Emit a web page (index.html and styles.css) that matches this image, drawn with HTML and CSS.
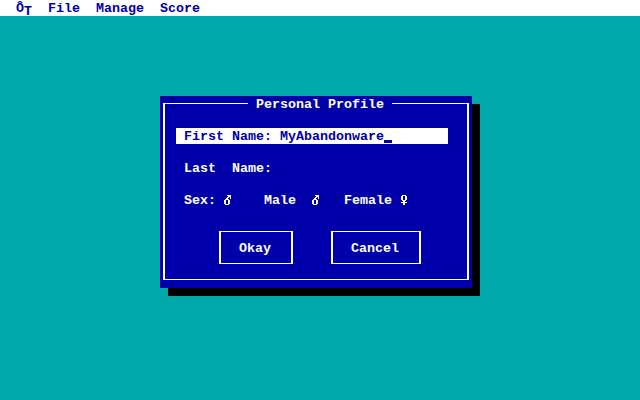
FILE: index.html
```html
<!DOCTYPE html>
<html lang="en">
    <head>
        <meta charset="UTF-8">
        <title>Personal Profile</title>
        <link rel="stylesheet" href="styles.css">
    </head>

    <body class="screen">
        <nav class="menu">
            <span class="menu__logo">Ô<span class="menu__logo__sub">T</span></span>
            <span class="menu__entry">File</span>
            <span class="menu__entry">Manage</span>
            <span class="menu__entry">Score</span>
        </nav>

        <main class="desktop">
            <section class="dialog">
                <div class="dialog__frame">
                    <header class="dialog__title">Personal Profile</header>

                    <div class="dialog__row dialog__row--active">First Name: MyAbandonware<span class="dialog__cursor"></span></div>
                    <div class="dialog__row">Last  Name:</div>
                    <div class="dialog__row dialog__row--sex">
                        <span>Sex:</span>
                        <svg class="dialog__symbol" viewBox="0 -1 8 16"><path d="M3 2h4v1H3zM4 3h3v1H4zM3 4h2v1H3zM6 4h1v1H6zM2 5h2v1H2zM6 5h1v1H6zM1 6h4v1H1zM0 7h2v4H0zM4 7h2v4H4zM1 11h4v1H1z"/></svg>
                        <span>Male</span>
                        <svg class="dialog__symbol" viewBox="0 -1 8 16"><path d="M3 2h4v1H3zM4 3h3v1H4zM3 4h2v1H3zM6 4h1v1H6zM2 5h2v1H2zM6 5h1v1H6zM1 6h4v1H1zM0 7h2v4H0zM4 7h2v4H4zM1 11h4v1H1z"/></svg>
                        <span>Female</span>
                        <svg class="dialog__symbol" viewBox="0 -1 8 16"><path d="M2 2h4v1H2zM1 3h2v4H1zM5 3h2v4H5zM2 7h4v1H2zM3 8h2v4H3zM1 9h6v1H1z"/></svg>
                    </div>

                    <div class="dialog__buttons">
                        <div class="dialog__button">Okay</div>
                        <div class="dialog__button">Cancel</div>
                    </div>
                </div>
            </section>
        </main>
    </body>
</html>
```

FILE: styles.css
```css
html,
body {
    border: none;
    height: 100%;
    margin: 0 0 0 0;
    padding: 0 0 0 0;
    width: 100%;
}

:root {
    --color-blue: #0000aa;
    --color-teal: #00aaaa;
    --color-white: #ffffff;
    --color-black: #000000;
}

.screen {
    background-color: var(--color-teal);
    color: var(--color-white);
    display: flex;
    flex-direction: column;
    font-family: "Liberation Mono", monospace;
    font-size: 13.334px;
    font-weight: bold;
    line-height: 18px;
    overflow: hidden;
}

.menu {
    background-color: var(--color-white);
    color: var(--color-blue);
    display: flex;
    flex: none;
    gap: 16px;
    height: 16px;
    padding-left: 16px;
}

.menu__logo__sub {
    vertical-align: -3px;
}

.desktop {
    flex: 1;
    padding: 80px 0 0 160px;
}

.dialog {
    background-color: var(--color-blue);
    box-shadow: var(--color-black) 8px 8px 0 0;
    box-sizing: border-box;
    height: 192px;
    padding: 7px 3px 8px 3px;
    width: 312px;
}

.dialog__frame {
    border-bottom: 1px solid var(--color-white);
    border-left: 2px solid var(--color-white);
    border-right: 2px solid var(--color-white);
    border-top: 1px solid var(--color-white);
    box-sizing: border-box;
    height: 177px;
    padding: 24px 0 0 11px;
    position: relative;
}

.dialog__title {
    background-color: var(--color-blue);
    height: 16px;
    left: 83px;
    padding: 0 8px;
    position: absolute;
    top: -8px;
}

.dialog__row {
    box-sizing: border-box;
    height: 16px;
    margin-bottom: 16px;
    padding-left: 8px;
    white-space: pre;
    width: 272px;
}

.dialog__row--active {
    background-color: var(--color-white);
    color: var(--color-blue);
    position: relative;
}

.dialog__row--sex {
    display: grid;
    grid-template-columns: 40px 40px 48px 32px 56px 8px;
    white-space: normal;
}

.dialog__symbol {
    fill: var(--color-white);
    height: 16px;
    shape-rendering: crispEdges;
    width: 8px;
}

.dialog__cursor {
    background-color: var(--color-blue);
    height: 3px;
    left: 208px;
    position: absolute;
    top: 12px;
    width: 8px;
}

.dialog__buttons {
    display: flex;
    gap: 38px;
    margin: 23px 0 0 43px;
}

.dialog__button {
    border-bottom: 1px solid var(--color-white);
    border-left: 2px solid var(--color-white);
    border-right: 2px solid var(--color-white);
    border-top: 1px solid var(--color-white);
    height: 16px;
    padding: 8px 20px 7px 18px;
}
```
